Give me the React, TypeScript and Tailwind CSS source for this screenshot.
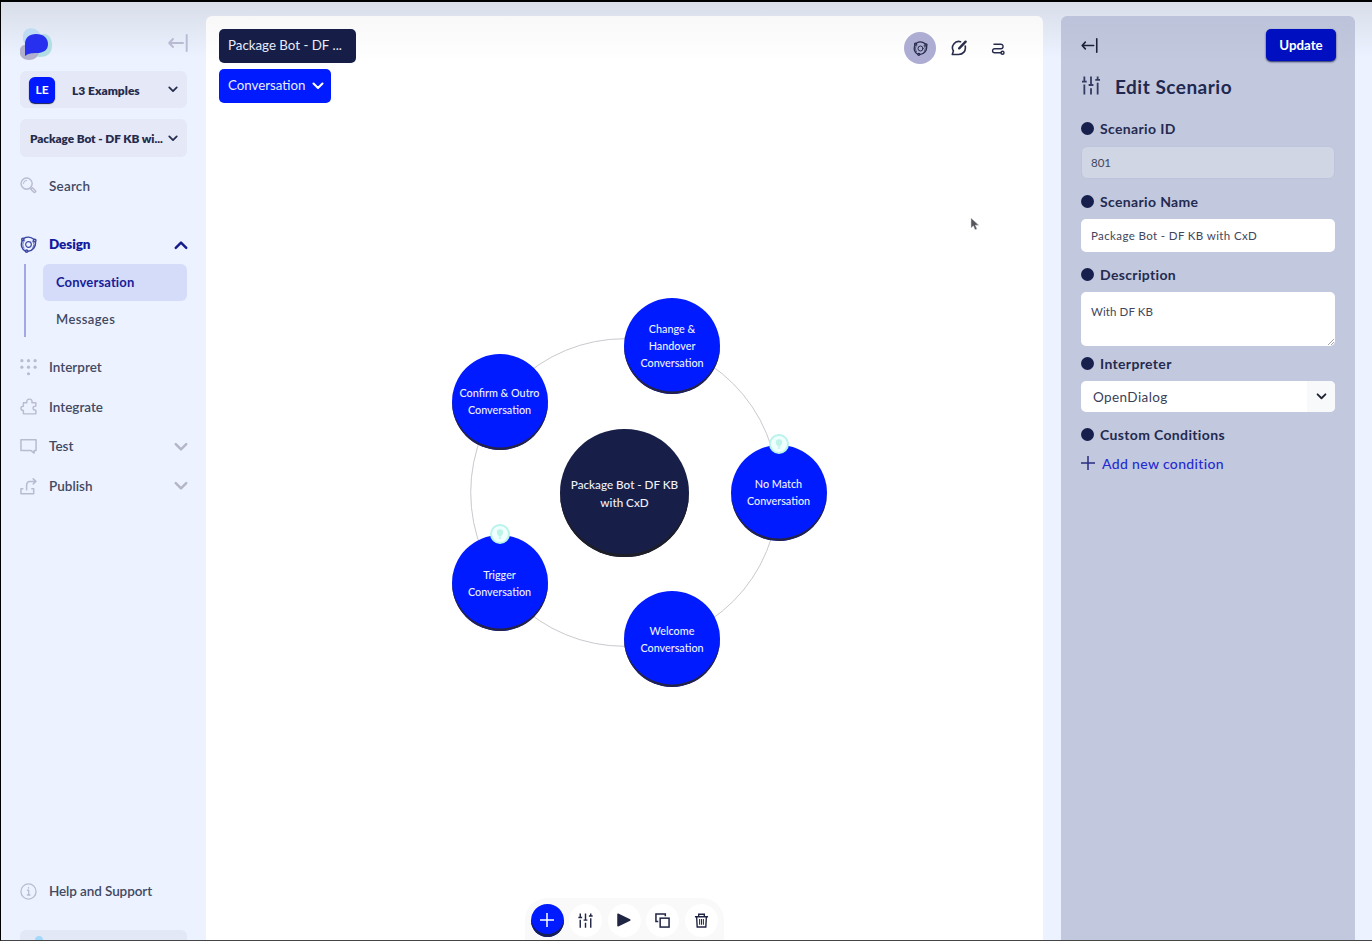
import React from "react";

type IconProps = { className?: string };

const stroke = {
  fill: "none",
  stroke: "currentColor",
  strokeLinecap: "round" as const,
  strokeLinejoin: "round" as const,
};

function Chevron({ className = "" }: IconProps) {
  return (
    <svg viewBox="0 0 12 8" className={"shrink-0 " + className} {...stroke} strokeWidth={2.1}>
      <path d="M1.5 1.5 6 6l4.5-4.5" />
    </svg>
  );
}

function CollapseIcon({ className = "" }: IconProps) {
  return (
    <svg viewBox="0 0 20 18" className={className} {...stroke} strokeWidth={1.9}>
      <path d="M15 9H1.5M5 5 1.2 9 5 13M18.7 1v16" />
    </svg>
  );
}

function OrbitIcon({ className = "" }: IconProps) {
  return (
    <svg viewBox="0 0 18 18" className={className} {...stroke} strokeWidth={1.5}>
      <path d="M4 2.600C7 .6 11.500.7 14.600 3.400M16.300 6.200c.8 4.500-2.500 9.400-7.800 10M5.600 15.900C1.800 14 .4 9.500 2.300 5.200" />
      <circle cx="9" cy="9" r="3" strokeWidth={1.2} />
      <circle cx="15.600" cy="4.800" r="1.300" />
      <circle cx="7" cy="16" r="1.200" />
      <circle cx="3" cy="3.600" r="1.200" />
      <path d="M4.200 12.800a6.200 6.200 0 0 1 .7-8M13.400 5.200a6 6 0 0 1 .3 7.400" strokeWidth={0.8} />
    </svg>
  );
}

function SearchIcon({ className = "" }: IconProps) {
  return (
    <svg viewBox="0 0 18 18" className={className} {...stroke} strokeWidth={1.5}>
      <circle cx="7" cy="7" r="5.900" />
      <path d="M3.800 7A3.200 3.200 0 0 1 7 3.800M11.200 11.200l1 1" strokeWidth={1.100} />
      <path d="m11.400 13 1.700-1.600 3.100 2.900a1.200 1.200 0 0 1-1.700 1.700z" />
    </svg>
  );
}

function DotsIcon({ className = "" }: IconProps) {
  return (
    <svg viewBox="0 0 18 18" className={className} fill="currentColor">
      <circle cx="2" cy="1.800" r="1.700" />
      <circle cx="9" cy="1.800" r="1.700" />
      <circle cx="16" cy="1.800" r="1.700" />
      <circle cx="2" cy="8.700" r="1.700" />
      <circle cx="9" cy="8.700" r="1.700" />
      <circle cx="16" cy="8.700" r="1.700" />
      <circle cx="9" cy="15.600" r="1.700" />
    </svg>
  );
}

function PuzzleIcon({ className = "" }: IconProps) {
  return (
    <svg viewBox="0 0 18 18" className={className} {...stroke} strokeWidth={1.5}>
      <path d="M3.600 5H7.300C6.600 2.600 8 1.200 10 1.200S13.300 2.600 12.600 5H16.800V8.600C14.800 8.400 13.800 9.400 13.800 10.700S14.800 13 16.800 12.800V16.800H3.600V13.200C2 13.200 1 12.200 1 10.900S2 8.700 3.600 8.700Z" />
    </svg>
  );
}

function CommentIcon({ className = "" }: IconProps) {
  return (
    <svg viewBox="0 0 18 18" className={className} {...stroke} strokeWidth={1.600}>
      <path d="M1 1.800h16v11.500H15V16l-3.300-2.700H1z" />
    </svg>
  );
}

function PublishIcon({ className = "" }: IconProps) {
  return (
    <svg viewBox="0 0 18 18" className={className} {...stroke} strokeWidth={1.600}>
      <path d="M3 11.500H1v5.300h13.500v-5.300H12.500M7 12.500V8c0-2.700 1-4.400 3.500-4.400H16M14 .9 16.800 3.600 14 6.400" />
    </svg>
  );
}

function InfoIcon({ className = "" }: IconProps) {
  return (
    <svg viewBox="0 0 18 18" className={className} {...stroke} strokeWidth={1.400}>
      <circle cx="9" cy="9" r="8" />
      <path d="M8 7.700h1.200v4.800M7.800 12.700h2.800M9 4.900v.4" />
    </svg>
  );
}

function SlidersIcon({ className = "" }: IconProps) {
  return (
    <svg viewBox="0 0 20 20" className={className} fill="none" stroke="currentColor" strokeWidth={1.900}>
      <path d="M3 .5v5.500M.5 6h5M3 9v10.500M10 .5v9M7.500 9.500h5M10 13v6.500M17 .5v3M14.500 4h5M17 7v12.500" />
    </svg>
  );
}

function EditBubbleIcon({ className = "" }: IconProps) {
  return (
    <svg viewBox="0 0 16 16" className={className} {...stroke} strokeWidth={1.600}>
      <path d="M9.500 1.700A6.300 6.300 0 0 0 2.400 11L1.300 14.500H7.500C12 14.500 15.200 11 14.200 6" />
      <path d="M8.200 8.300 14.600 1.700" strokeWidth={2.400} />
    </svg>
  );
}

function RouteIcon({ className = "" }: IconProps) {
  return (
    <svg viewBox="0 0 14 12" className={className} {...stroke} strokeWidth={1.400}>
      <path d="M3 1.200h6.800a2.200 2.200 0 0 1 0 4.500H3.600a2 2 0 0 0 0 4.100H10" />
      <circle cx="11.500" cy="9.800" r="1.500" />
    </svg>
  );
}

function CopyIcon({ className = "" }: IconProps) {
  return (
    <svg viewBox="0 0 16 16" className={className} fill="none" stroke="currentColor" strokeWidth={1.600}>
      <path d="M3.500 9H1V1h10v2.500" />
      <rect x="5.500" y="5.500" width="9.500" height="9.500" />
    </svg>
  );
}

function TrashIcon({ className = "" }: IconProps) {
  return (
    <svg viewBox="0 0 16 16" className={className} fill="none" stroke="currentColor" strokeWidth={1.500}>
      <path d="M1 4h14M5 4V1.300h6V4M2.800 4l.6 11h9.200l.6-11" />
      <path d="M6 6.500v6M8 6.500v6M10 6.500v6" strokeWidth={1.100} />
    </svg>
  );
}

function PlusIcon({ className = "" }: IconProps) {
  return (
    <svg viewBox="0 0 14 14" className={className} fill="none" stroke="currentColor" strokeWidth={1.500}>
      <path d="M7 0v14M0 7h14" />
    </svg>
  );
}

function Logo() {
  return (
    <svg viewBox="0 0 32 32" className="h-8 w-8">
      <path d="M3 7C5-2 15-1 19 4c5 7 1 15-5 16C6 21 2 14 3 7z" fill="#bedcf3" />
      <path d="M20 7c7-3 12 2 12 10 0 9-5 12-13 12-7-1-8-19 1-22z" fill="#b1dde3" />
      <path d="M1 19c5-6 18-1 18 4 0 6-5 9-10 9-9 0-11-8-8-13z" fill="#b1b0cd" />
      <path d="M5 28V16C5 9.500 9.500 6 16 6c7.500 0 12 4 12 10 0 6.500-5 9-11.500 9C11 25 8 25.800 5 28z" fill="#2830ef" />
    </svg>
  );
}

type NavRowProps = {
  icon: React.ReactNode;
  label: string;
  textClass?: string;
  chevron?: string;
};

function NavRow({ icon, label, textClass = "text-[#424962] font-semibold", chevron }: NavRowProps) {
  return (
    <div className="flex h-[39.700px] items-center pl-[19px] pr-[18px]">
      <span className="flex w-[29px] text-[#b9bbd0]">{icon}</span>
      <span className={"flex-1 whitespace-nowrap text-[13.500px] " + textClass}>{label}</span>
      {chevron ? <Chevron className={chevron} /> : null}
    </div>
  );
}

function Sidebar() {
  return (
    <aside className="flex w-[205px] shrink-0 flex-col">
      <div className="mt-[26px] flex h-8 items-center justify-between pl-[19px] pr-[18px]">
        <Logo />
        <CollapseIcon className="mb-[2px] h-[18px] w-5 text-[#b9bbd2]" />
      </div>
      <div className="ml-[19px] mt-[11px] flex h-[37px] w-[167px] shrink-0 items-center rounded-md bg-[#e5e9f7] pl-[9px] pr-[9px] text-[#252b4c]">
        <div className="flex h-[26px] w-[26px] items-center justify-center rounded-md bg-[#0019ff] text-[12px] font-bold text-white shadow-[0_1px_1px_#101850]">LE</div>
        <span className="ml-[17px] flex-1 pt-[2px] text-[12px] font-extrabold">L3 Examples</span>
        <Chevron className="h-[7px] w-[10px]" />
      </div>
      <div className="ml-[19px] mt-[11px] flex h-[38px] w-[167px] shrink-0 items-center rounded-md bg-[#e5e9f7] pl-[10px] pr-[9px] text-[#252b4c]">
        <span className="flex-1 whitespace-nowrap pt-[2px] text-[11.800px] font-extrabold tracking-[-0.060px]">Package Bot - DF KB wi...</span>
        <Chevron className="h-[7px] w-[10px]" />
      </div>
      <div className="mt-[9px]">
        <NavRow icon={<SearchIcon className="h-[17px] w-[17px]" />} label="Search" textClass="text-[#424962] font-semibold tracking-[0.200px]" />
      </div>
      <div className="mt-[19px]">
        <NavRow
          icon={<OrbitIcon className="h-[17px] w-[17px] text-[#3b46a5]" />}
          label="Design"
          textClass="text-[#141c9c] font-extrabold tracking-[-0.100px]"
          chevron="h-[10px] w-[14px] rotate-180 text-[#141c8c]"
        />
      </div>
      <div className="ml-[23px] flex h-[73px] border-l-2 border-[#a3a7e4]">
        <div className="ml-[17px] flex flex-col">
          <div className="flex h-[37px] w-[144px] items-center rounded-md bg-[#d5dcfa] pl-[13px] pt-px text-[13px] font-bold tracking-[0.140px] text-[#182097]">Conversation</div>
          <div className="flex h-[37px] items-center pl-[13px] pt-[2px] text-[13px] font-semibold tracking-[0.400px] text-[#424962]">Messages</div>
        </div>
      </div>
      <div className="mt-[10px] flex flex-col">
        <NavRow icon={<DotsIcon className="h-[17px] w-[17px]" />} label="Interpret" />
        <NavRow icon={<PuzzleIcon className="h-[17px] w-[17px]" />} label="Integrate" />
        <NavRow icon={<CommentIcon className="h-[17px] w-[17px]" />} label="Test" chevron="h-[10px] w-[14px] text-[#b4b6c8]" />
        <NavRow icon={<PublishIcon className="h-[17px] w-[17px]" />} label="Publish" chevron="h-[10px] w-[14px] text-[#b4b6c8]" />
      </div>
      <div className="mt-auto">
        <NavRow icon={<InfoIcon className="h-[17px] w-[17px]" />} label="Help and Support" textClass="text-[#424962] font-semibold tracking-[-0.100px]" />
        <div className="ml-[19px] mt-[19px] flex h-[10px] w-[167px] items-end rounded-t-md bg-[#e3e8f6] pl-[15px]">
          <div className="h-1 w-2 rounded-t-full bg-[#a4d8fa]" />
        </div>
      </div>
    </aside>
  );
}

type ConversationNode = { lines: string[]; place: string; badge?: boolean };

const nodes: ConversationNode[] = [
  { lines: ["Change &", "Handover", "Conversation"], place: "left-[418px] top-[282px]" },
  { lines: ["No Match", "Conversation"], place: "left-[524.500px] top-[428.500px]", badge: true },
  { lines: ["Welcome", "Conversation"], place: "left-[418px] top-[575px]" },
  { lines: ["Trigger", "Conversation"], place: "left-[245.500px] top-[519px]", badge: true },
  { lines: ["Confirm & Outro", "Conversation"], place: "left-[245.500px] top-[337.500px]" },
];

function Badge() {
  return (
    <div className="absolute left-[38px] top-[-11px] flex h-5 w-5 items-center justify-center rounded-full border-2 border-[#b9f3ec] bg-[#effffd]">
      <svg viewBox="0 0 10 14" className="h-3 w-2">
        <path d="M1 5a4 4 0 0 1 8 0c0 2.500-2 3-2.300 5H3.300C3 8 1 7.500 1 5zM3.500 11h3v2h-3z" fill="#bdf3e8" />
      </svg>
    </div>
  );
}

function Diagram() {
  return (
    <div className="absolute inset-0">
      <svg className="absolute left-[262px] top-[320px] h-[312px] w-[312px]" viewBox="0 0 312 312">
        <circle cx="156.500" cy="156.500" r="153.800" fill="none" stroke="#c9c9cf" strokeWidth="1" />
      </svg>
      <div className="absolute left-[354px] top-[412.500px] flex h-[128px] w-[129px] flex-col items-center justify-center rounded-full bg-[#171f49] pt-px text-[11.700px] font-medium leading-[18px] text-[#f0f1fa] shadow-[inset_0_-3px_0_#1e1e27]">
        <span>Package Bot - DF KB</span>
        <span>with CxD</span>
      </div>
      {nodes.map((n) => (
        <div
          key={n.lines[0]}
          className={"absolute flex h-24 w-24 flex-col items-center justify-center whitespace-nowrap rounded-full bg-[#001bff] pt-px text-[10.800px] font-medium leading-[16.700px] text-[#edf1ff] shadow-[inset_0_-2.500px_0_#242346] " + n.place}
        >
          {n.lines.map((l) => (
            <span key={l}>{l}</span>
          ))}
          {n.badge ? <Badge /> : null}
        </div>
      ))}
    </div>
  );
}

function Toolbar() {
  return (
    <div className="absolute left-[319px] top-[882px] flex h-[44px] w-[199px] items-center gap-[5.500px] rounded-t-[22px] bg-[#f8f9f8] pl-[5.500px] text-[#202544]">
      <div className="flex h-[33px] w-[33px] items-center justify-center rounded-full bg-[#001bff] text-white shadow-[inset_0_-3px_0_#171d55]">
        <PlusIcon className="h-[14px] w-[14px]" />
      </div>
      <div className="flex h-[33px] w-[33px] items-center justify-center rounded-full bg-white">
        <SlidersIcon className="h-[15px] w-[15px]" />
      </div>
      <div className="flex h-[33px] w-[33px] items-center justify-center rounded-full bg-white">
        <svg viewBox="0 0 14 14" className="h-[14px] w-[14px]">
          <path d="M1 1.200v11.600L12.800 7z" fill="currentColor" stroke="currentColor" strokeLinejoin="round" strokeWidth="1.500" />
        </svg>
      </div>
      <div className="flex h-[33px] w-[33px] items-center justify-center rounded-full bg-white">
        <CopyIcon className="h-[15px] w-[15px]" />
      </div>
      <div className="flex h-[33px] w-[33px] items-center justify-center rounded-full bg-white">
        <TrashIcon className="h-[15px] w-[15px]" />
      </div>
    </div>
  );
}

function Canvas() {
  return (
    <main className="relative mt-[14px] w-[837px] shrink-0 overflow-hidden rounded-t-md bg-linear-to-b from-[#f8f8f8] via-white via-5% to-white">
      <Diagram />
      <div className="relative flex items-start justify-between pl-[13px] pr-[29px] pt-[13px]">
        <div className="flex flex-col items-start gap-[6px] text-[13.300px] text-[#e9ebf8]">
          <div className="flex h-[34px] w-[137px] items-center whitespace-nowrap rounded-[5px] bg-[#161e48] pl-[9px]">Package Bot - DF ...</div>
          <div className="flex h-[34px] w-[112px] items-center justify-between rounded-[5px] bg-[#001bff] pl-[9px] pr-[7px]">
            Conversation
            <Chevron className="h-[8px] w-[12px] text-white" />
          </div>
        </div>
        <div className="mt-[3px] flex items-center gap-[7px] text-[#282c4b]">
          <div className="flex h-8 w-8 items-center justify-center rounded-full bg-[#adadd4]">
            <OrbitIcon className="h-[15px] w-[15px]" />
          </div>
          <div className="flex h-8 w-8 items-center justify-center">
            <EditBubbleIcon className="h-4 w-4" />
          </div>
          <div className="flex h-8 w-8 items-center justify-center">
            <RouteIcon className="mr-px mt-px h-3 w-[14px]" />
          </div>
        </div>
      </div>
      <svg viewBox="0 0 10 14" className="absolute left-[764px] top-[201px] h-[14px] w-[10px]">
        <path d="M1 1v10l2.400-2.200L5 12.700l2-.8-1.700-3.700h3.500z" fill="#55555c" stroke="#d4d4d8" strokeWidth=".5" />
      </svg>
      <Toolbar />
    </main>
  );
}

function FieldLabel({ children }: { children: string }) {
  return (
    <div className="flex h-5 items-center gap-[6px] whitespace-nowrap text-[14px] font-bold tracking-[0.350px] text-[#242a50]">
      <span className="h-[13px] w-[13px] rounded-full bg-[#171f4c]" />
      {children}
    </div>
  );
}

function ScenarioPanel() {
  return (
    <section className="ml-[18px] mt-[14px] flex w-[294px] shrink-0 flex-col rounded-t-md bg-linear-to-b from-[#bcc3da] via-[#c2c8dd] via-5% to-[#c2c8dd] pl-5 pr-5">
      <div className="mt-[13px] flex h-8 items-center justify-between">
        <CollapseIcon className="h-[15px] w-[17px] text-[#1d2038]" />
        <div className="mr-[-1px] flex h-8 w-[70px] items-center justify-center rounded-[5px] bg-[#0010c0] pt-[2px] text-[13.300px] font-bold text-white shadow-[0_1px_2px_#202860]">Update</div>
      </div>
      <div className="mt-[11px] flex h-[30px] items-center">
        <SlidersIcon className="mb-[4px] h-[19px] w-5 text-[#343b62]" />
        <h1 className="ml-[14px] text-[19px] font-bold tracking-[0.500px] text-[#212850]">Edit Scenario</h1>
      </div>
      <div className="mt-[16px]">
        <FieldLabel>Scenario ID</FieldLabel>
      </div>
      <div className="mt-[8px] flex h-[33px] items-center rounded-md border border-[#bec4db] bg-[#d1d6e4] pl-[9px] pt-px text-[11.500px] text-[#41465c]">801</div>
      <div className="mt-[12px]">
        <FieldLabel>Scenario Name</FieldLabel>
      </div>
      <div className="mt-[8px] flex h-[33px] items-center rounded-[5px] bg-white pl-[10px] pt-px text-[11.500px] tracking-[0.380px] text-[#41465c]">Package Bot - DF KB with CxD</div>
      <div className="mt-[12px]">
        <FieldLabel>Description</FieldLabel>
      </div>
      <div className="mt-[8px] flex h-[54px] items-end justify-between rounded-[5px] bg-white pl-[10px]">
        <span className="self-start pt-[11px] text-[11.500px] tracking-[0.100px] text-[#41465c]">With DF KB</span>
        <svg viewBox="0 0 8 8" className="h-2 w-2">
          <path d="M1 7 7 1M4 7l3-3" stroke="#a2a4ad" strokeWidth="1" />
        </svg>
      </div>
      <div className="mt-[7px]">
        <FieldLabel>Interpreter</FieldLabel>
      </div>
      <div className="mt-[8px] flex h-[31px] items-center justify-between overflow-hidden rounded-[5px] bg-white pl-[12px] text-[13.500px] tracking-[0.400px] text-[#3a4058]">
        <span className="pt-[2px]">OpenDialog</span>
        <span className="flex h-full w-7 items-center justify-center bg-[#f8f9fb] text-[#202332]">
          <Chevron className="h-[7px] w-[11px]" />
        </span>
      </div>
      <div className="mt-[12px]">
        <FieldLabel>Custom Conditions</FieldLabel>
      </div>
      <div className="mt-[9px] flex h-5 items-center gap-[7px] text-[14px] font-medium tracking-[0.350px] text-[#252cd2]">
        <PlusIcon className="mb-px h-[14px] w-[14px] text-[#282d80]" />
        Add new condition
      </div>
    </section>
  );
}

export default function App() {
  return (
    <div className="flex h-[941px] w-[1372px] overflow-hidden border-b border-l border-t-2 border-b-[#444] border-l-black border-t-black bg-[#ecf2ff] bg-linear-to-b from-[#d8dde9] via-[#ecf2ff] via-6% to-[#ecf2ff] font-['Lato',sans-serif]">
      <Sidebar />
      <Canvas />
      <ScenarioPanel />
    </div>
  );
}
